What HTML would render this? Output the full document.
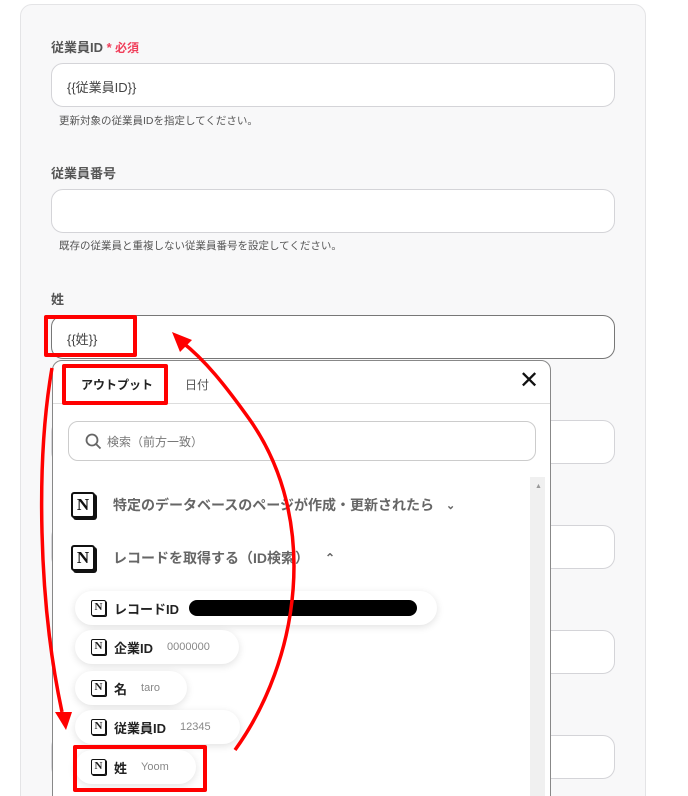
<!DOCTYPE html>
<html style="height:796px;overflow:hidden"><head><meta charset="utf-8"><style>
*{box-sizing:border-box;margin:0;padding:0}
body{width:688px;height:796px;overflow:hidden;background:#fff;font-family:"Liberation Sans","Noto Sans CJK JP",sans-serif;position:relative}
.card{position:absolute;left:20px;top:4px;width:626px;height:820px;background:#f8f8f9;border:1px solid #e4e4e6;border-radius:12px}
.lbl{position:absolute;left:51px;font-size:13px;font-weight:bold;color:#555}
.inp{position:absolute;left:51px;width:564px;height:44px;background:#fff;border:1px solid #d4d4d8;border-radius:12px;font-size:13px;color:#444;padding:13px 15px}
.hint{position:absolute;left:59px;font-size:10.5px;color:#555}
.pop{position:absolute;left:52px;top:360px;width:499px;height:460px;background:#fff;border:1px solid #888;border-radius:10px}
.tabs{position:absolute;left:0;top:0;width:497px;height:43px;border-bottom:1px solid #ddd}
.search{position:absolute;left:15px;top:60px;width:468px;height:40px;border:1px solid #ccc;border-radius:10px;font-size:12px;color:#777;padding:11px 0 0 38px}
.grp{position:absolute;left:18px;font-size:14px;font-weight:bold;color:#666;display:flex;align-items:center}
.nicon{display:inline-block;width:24px;height:26px;border:2.5px solid #111;border-radius:3px;font:bold 17px "Liberation Serif",serif;text-align:center;line-height:21px;color:#111;background:#fff;box-shadow:2px 2px 0 #111}
.pill{position:absolute;left:22px;height:34px;background:#fff;border-radius:17px;box-shadow:0 2px 8px rgba(0,0,0,.12);display:flex;align-items:center;padding:0 16px;font-size:13px;font-weight:bold;color:#222}
.sn{display:inline-block;width:15px;height:16px;border:1.8px solid #111;border-radius:2px;font:bold 11px "Liberation Serif",serif;text-align:center;line-height:13px;margin-right:8px;box-shadow:1px 1px 0 #111}
.v{font-weight:normal;color:#888;font-size:11px;margin-left:14px}
.red{position:absolute;border:4px solid #f00;border-radius:2px}
</style></head><body>
<div class="card"></div>
<div class="lbl" style="top:37px">従業員ID <span style="color:#f03e5a">*</span><span style="color:#f03e5a;font-size:12px"> 必須</span></div>
<div class="inp" style="top:63px">{{従業員ID}}</div>
<div class="hint" style="top:113px">更新対象の従業員IDを指定してください。</div>
<div class="lbl" style="top:163px">従業員番号</div>
<div class="inp" style="top:189px"></div>
<div class="hint" style="top:238px">既存の従業員と重複しない従業員番号を設定してください。</div>
<div class="lbl" style="top:289px">姓</div>
<div class="inp" style="top:315px;border-color:#777">{{姓}}</div>
<div class="inp" style="top:420px"></div>
<div class="inp" style="top:525px"></div>
<div class="inp" style="top:630px"></div>
<div class="inp" style="top:735px"></div>
<div class="pop">
 <div class="tabs">
  <div style="position:absolute;left:28px;top:15px;font-size:12px;font-weight:bold;color:#222">アウトプット</div>
  <div style="position:absolute;left:132px;top:15px;font-size:12px;color:#555">日付</div>
  <div style="position:absolute;left:466px;top:8px;font-size:24px;color:#111;line-height:24px">✕</div>
 </div>
 <div class="search"><svg style="position:absolute;left:16px;top:11px" width="17" height="17" viewBox="0 0 17 17"><circle cx="7" cy="7" r="5.5" fill="none" stroke="#666" stroke-width="1.8"/><path d="M11 11l4.5 4.5" stroke="#666" stroke-width="1.8"/></svg>検索（前方一致）</div>
 <div style="position:absolute;left:477px;top:116px;width:15px;height:350px;background:#f0f0f0"></div>
 <div style="position:absolute;left:482px;top:122px;font-size:7px;color:#999">▲</div>
 <div class="grp" style="top:131px"><span class="nicon">N</span><span style="margin-left:18px">特定のデータベースのページが作成・更新されたら</span><span style="margin-left:12px;font-size:11px">⌄</span></div>
 <div class="grp" style="top:184px"><span class="nicon">N</span><span style="margin-left:18px">レコードを取得する（ID検索）</span><span style="margin-left:16px;font-size:12px">⌃</span></div>
 <div class="pill" style="top:230px;width:362px"><span class="sn">N</span>レコードID<span style="display:inline-block;width:228px;height:16px;background:#000;border-radius:8px;margin-left:10px"></span></div>
 <div class="pill" style="top:269px;width:164px"><span class="sn">N</span>企業ID<span class="v">0000000</span></div>
 <div class="pill" style="top:310px;width:112px"><span class="sn">N</span>名<span class="v">taro</span></div>
 <div class="pill" style="top:349px;width:165px"><span class="sn">N</span>従業員ID<span class="v">12345</span></div>
 <div class="pill" style="top:389px;width:121px"><span class="sn">N</span>姓<span class="v">Yoom</span></div>
</div>
<div class="red" style="left:44px;top:315px;width:93px;height:42px"></div>
<div class="red" style="left:62px;top:364px;width:106px;height:41px"></div>
<div class="red" style="left:73px;top:745px;width:134px;height:47px"></div>
<svg style="position:absolute;left:0;top:0" width="688" height="796">
<path d="M235 750 C300 660 320 520 250 420 C225 385 205 360 182 342" fill="none" stroke="#f00" stroke-width="3.5"/>
<polygon points="172,332 192,340 180,352" fill="#f00"/>
<path d="M52 368 C36 460 38 600 62 712" fill="none" stroke="#f00" stroke-width="3.5"/>
<polygon points="55,712 72,712 66,730" fill="#f00"/>
</svg>
</body></html>
